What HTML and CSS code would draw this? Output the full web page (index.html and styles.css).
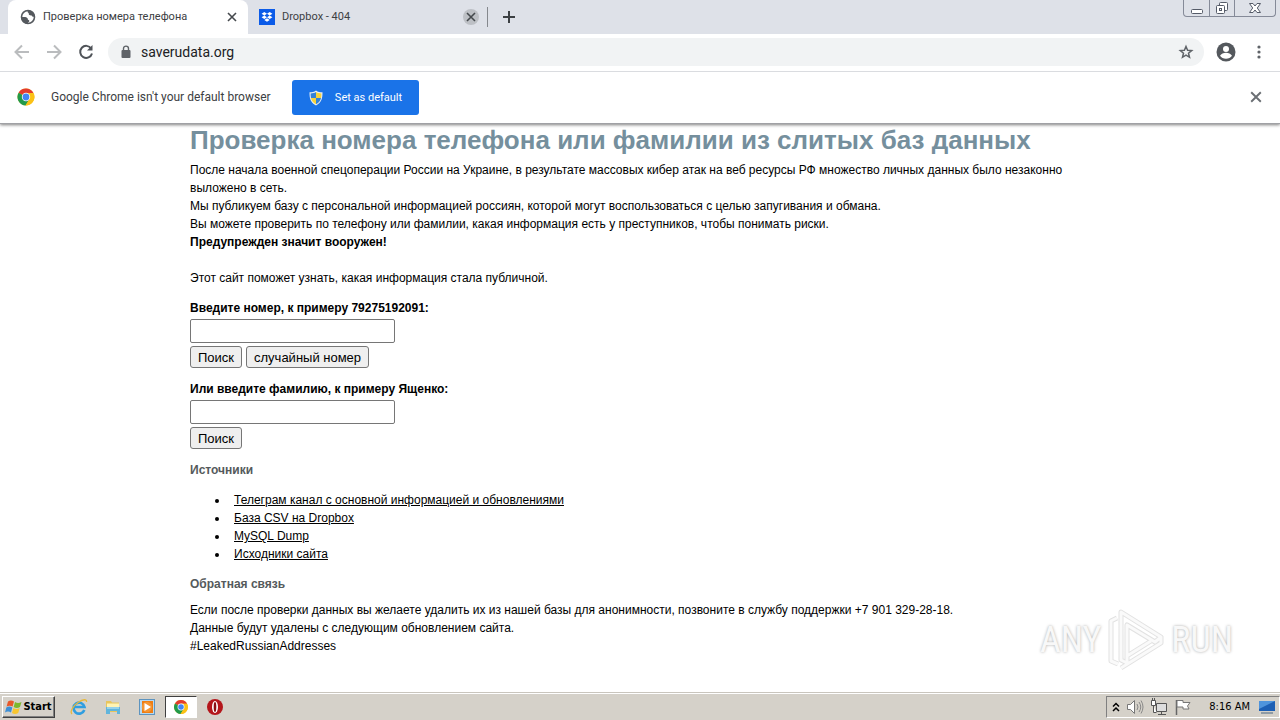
FILE: index.html
```html
<!DOCTYPE html>
<html lang="ru">
<head>
  <meta charset="UTF-8" />
  <meta name="viewport" content="width=device-width, initial-scale=1.0" />
  <title>Проверка номера телефона</title>
  <link rel="stylesheet" href="styles.css">
</head>
<body>
  <svg class="defs" aria-hidden="true">
    <symbol id="chrome" viewBox="0 0 18 18">
      <circle cx="9" cy="9" r="8.500" fill="#fbc116" />
      <path d="M9 9 1.600 4.700A8.500 8.500 0 0 1 16.400 5H9z" fill="#e33b2e" />
      <path d="M1.600 4.700A8.500 8.500 0 0 0 8.500 17.500l4-6.500L9 9z" fill="#229a4b" />
      <path d="M9 5h7.400A8.500 8.500 0 0 1 8.500 17.500l4-6.500z" fill="#fbc116" />
      <circle cx="9" cy="9" r="4.200" fill="#fff" />
      <circle cx="9" cy="9" r="3.400" fill="#4285f4" />
    </symbol>
    <symbol id="cross" viewBox="0 0 10 10">
      <path d="M1 1l8 8M9 1L1 9" fill="none" stroke="currentColor" stroke-width="1.6" />
    </symbol>
  </svg>

  <header class="browser">
    <div class="tabs">
      <div class="tab active">
        <svg class="favicon" viewBox="0 0 16 16"><circle cx="8" cy="8" r="6.500" fill="#fff" stroke="#55595e" stroke-width="1.600" /><path d="M8 1.200c3 0 6.600 2.500 6.800 6.200-1 .8-2.300.5-2.800-.4-.4-.8-1.700-.3-2.600-.9-1-.7-.2-1.700-.9-2.200S7 2.500 8 1.200zM1.300 8h3.900c1.300 0 2.600 1 2.600 2.200 0 .8 1.500.6 1.500 1.700 0 1.200-1.500 1.100-1.700 2.900C4 14.800 1.200 11.500 1.300 8z" fill="#55595e" /></svg>
        <span class="tab-title">Проверка номера телефона</span>
        <button class="tab-close" aria-label="Close tab"><svg><use href="#cross" /></svg></button>
      </div>
      <div class="tab">
        <svg class="favicon" viewBox="0 0 16 16"><path fill="#0b5be8" d="M0 0h16v16H0z" /><path fill="#fff" d="M5.300 3L8 4.800 5.300 6.500 2.600 4.800zM10.700 3l2.700 1.800-2.700 1.700L8 4.800zM5.300 6.500L8 8.200 5.300 10 2.600 8.200zM10.700 6.500l2.700 1.700-2.700 1.800L8 8.200zM8 9.200l2.700 1.800L8 12.700 5.300 11z" /></svg>
        <span class="tab-title">Dropbox - 404</span>
        <button class="tab-close round" aria-label="Close tab"><svg><use href="#cross" /></svg></button>
      </div>
      <button class="new-tab" aria-label="New tab"><svg viewBox="0 0 12 12"><path d="M6 0v12M0 6h12" stroke="#3c4043" stroke-width="2" /></svg></button>
      <div class="window-buttons">
        <button aria-label="Minimize"><svg viewBox="0 0 14 14"><rect x="1.500" y="8.500" width="11" height="4" rx="1" fill="#fff" stroke="#555b68" /></svg></button>
        <button aria-label="Restore"><svg viewBox="0 0 14 14"><rect x="4.500" y="1.500" width="8" height="8" rx="1" fill="#fff" stroke="#555b68" /><rect x="1.500" y="4.500" width="8" height="8" rx="1" fill="#fff" stroke="#555b68" /><rect x="4.500" y="7.500" width="2" height="2" fill="#fff" stroke="#555b68" /></svg></button>
        <button class="wide" aria-label="Close"><svg viewBox="0 0 14 14"><path d="M1.500 2.500h3.500l2 2.500 2-2.500h3.500L9.300 7l3.200 4.500H9L7 9l-2 2.500H1.500L4.700 7z" fill="#fff" stroke="#555b68" /></svg></button>
      </div>
    </div>

    <div class="toolbar">
      <button class="nav off" aria-label="Back"><svg viewBox="0 0 16 16"><path d="M15 8H2M8 1.500L1.500 8 8 14.500" /></svg></button>
      <button class="nav off" aria-label="Forward"><svg viewBox="0 0 16 16"><path d="M1 8h13M8 1.500L14.500 8 8 14.500" /></svg></button>
      <button class="nav" aria-label="Reload"><svg viewBox="0 0 16 16"><path d="M13.200 4.500A6 6 0 1 0 14 9.500" /><path d="M14.500 1v5.500H9z" class="solid" /></svg></button>
      <div class="address">
        <svg class="lock" viewBox="0 0 10 14"><path d="M2.500 6V3.600a2.500 2.500 0 0 1 5 0V6" fill="none" stroke="#5f6368" stroke-width="1.400" /><rect x="0.500" y="5" width="9" height="8" rx="1" fill="#5f6368" /></svg>
        <input type="text" value="saverudata.org" aria-label="Address" />
        <svg class="star" viewBox="0 0 16 16"><path d="M8 2.500l1.600 3.800 4.100.3-3.200 2.700 1 4L8 11.200l-3.500 2.100 1-4-3.200-2.700 4.100-.3z" fill="none" stroke="#5f6368" stroke-width="1.500" /></svg>
      </div>
      <button class="profile" aria-label="Profile"><svg viewBox="0 0 20 20"><circle cx="10" cy="10" r="9.500" fill="#54585d" /><circle cx="10" cy="7" r="3" fill="#fff" /><path d="M4 13.800c1.200-2 3.500-3 6-3s4.800 1 6 3c-1.300 1.900-3.500 3-6 3s-4.700-1.100-6-3z" fill="#fff" /></svg></button>
      <button class="menu" aria-label="Menu"><svg viewBox="0 0 4 14"><g fill="#5f6368"><circle cx="2" cy="2" r="1.600" /><circle cx="2" cy="7" r="1.600" /><circle cx="2" cy="12" r="1.600" /></g></svg></button>
    </div>

    <div class="infobar">
      <svg class="logo"><use href="#chrome" /></svg>
      <span class="message">Google Chrome isn't your default browser</span>
      <button class="set-default">
        <svg viewBox="0 0 14 16"><path d="M7 .5c2 1.500 4 1.800 6.500 1.800 0 6-.8 10.200-6.500 13.200C1.300 12.500.5 8.300.5 2.300 3 2.300 5 2 7 .5z" fill="#e9eef2" /><path d="M7 2v6H2C1.700 6.500 1.600 5 1.600 3.400 3.600 3.400 5.500 3 7 2z" fill="#3382d8" /><path d="M7 2c1.500 1 3.400 1.400 5.400 1.400 0 1.600-.1 3.100-.4 4.600H7zM2 8h5v6.200C4 12.700 2.600 10.700 2 8z" fill="#f6d33c" /><path d="M7 8h5c-.6 2.700-2 4.700-5 6.200z" fill="#3382d8" /></svg>
        Set as default
      </button>
      <button class="info-close" aria-label="Dismiss"><svg><use href="#cross" /></svg></button>
    </div>
  </header>

  <main class="page">
    <div class="content">
      <h1>Проверка номера телефона или фамилии из слитых баз данных</h1>
      <p>
        После начала военной спецоперации России на Украине, в результате массовых кибер атак на веб ресурсы РФ множество личных данных было незаконно выложено в сеть.<br />
        Мы публикуем базу с персональной информацией россиян, которой могут воспользоваться с целью запугивания и обмана.<br />
        Вы можете проверить по телефону или фамилии, какая информация есть у преступников, чтобы понимать риски.<br />
        <b>Предупрежден значит вооружен!</b><br />
        <br />
        Этот сайт поможет узнать, какая информация стала публичной.
      </p>
      <form>
        <label for="phone">Введите номер, к примеру 79275192091:</label>
        <input type="text" id="phone" name="phone" />
        <div class="actions">
          <button type="button">Поиск</button>
          <button type="button">случайный номер</button>
        </div>
      </form>
      <form>
        <label for="surname">Или введите фамилию, к примеру Ященко:</label>
        <input type="text" id="surname" name="surname" />
        <div class="actions">
          <button type="button">Поиск</button>
        </div>
      </form>
      <h3>Источники</h3>
      <ul>
        <li><a href="#">Телеграм канал с основной информацией и обновлениями</a></li>
        <li><a href="#">База CSV на Dropbox</a></li>
        <li><a href="#">MySQL Dump</a></li>
        <li><a href="#">Исходники сайта</a></li>
      </ul>
      <h3 class="feedback">Обратная связь</h3>
      <p>
        Если после проверки данных вы желаете удалить их из нашей базы для анонимности, позвоните в службу поддержки +7 901 329-28-18.<br />
        Данные будут удалены с следующим обновлением сайта.<br />
        #LeakedRussianAddresses
      </p>
    </div>
    <div class="watermark">
      <span>ANY</span>
      <svg viewBox="0 0 58 64"><g fill="none" stroke-linejoin="round"><path d="M10 10L4 13v40l7 3M14 4l40 25-6 5-28-17v38l-6-3zM14 60l40-25v-6M20 17v31l24-15" stroke="#e2e2e2" stroke-width="5" /><path d="M10 10L4 13v40l7 3M14 4l40 25-6 5-28-17v38l-6-3zM14 60l40-25v-6M20 48l24-15" stroke="#fafafa" stroke-width="3" /></g></svg>
      <span>RUN</span>
    </div>
  </main>

  <footer class="taskbar">
    <button class="start">
      <svg viewBox="0 0 18 16"><path d="M3 2.500c2-1.300 4-1.200 6 0L7.600 7.600c-2-1.200-4-1.200-6 0z" fill="#e8582a" /><path d="M10 3c2 1.200 4 1.200 6.500 0L15 8c-2.200 1.200-4.200 1.200-6.300 0z" fill="#7db82d" /><path d="M1.300 8.500c2-1.200 4-1.200 6 0L6 13.500c-2-1.200-4-1.200-6 0z" fill="#3d8fd6" /><path d="M8.400 9c2 1.200 4 1.200 6.300 0l-1.500 5c-2.200 1.200-4.200 1.200-6.200 0z" fill="#f8c62f" /></svg>
      Start
    </button>
    <nav class="apps">
      <button aria-label="Internet Explorer"><svg viewBox="0 0 18 18"><path d="M14.300 12A5.500 5.500 0 1 1 14.500 9H5" fill="none" stroke="#2f9ee0" stroke-width="2.600" /><path d="M2 16c-2.500-2 1-8 6-11.500S17 .8 16.500 4" fill="none" stroke="#e7b83a" stroke-width="1.300" /></svg></button>
      <button aria-label="Explorer"><svg viewBox="0 0 18 18"><path d="M2 3h5l1 1.500h7V14H2z" fill="#e8c55d" /><path d="M3 5.500h12V9H3z" fill="#fff3b4" /><path d="M2 9h14v7h-3v-3H6v3H2z" fill="#61b5dc" /><path d="M3 10h12" stroke="#c9edfa" /></svg></button>
      <button aria-label="Media Player"><svg viewBox="0 0 18 18"><rect x="1.500" y="1.500" width="15" height="15" fill="#b6d9f1" stroke="#5d94bf" /><rect x="4" y="3" width="11" height="12" fill="#ee7d13" /><circle cx="9" cy="9" r="5.200" fill="#f49532" /><path d="M6.500 5L13 9l-6.500 4z" fill="#fff" /></svg></button>
      <button class="pressed" aria-label="Chrome"><svg viewBox="-2 -2 22 22"><use href="#chrome" width="18" height="18" /></svg></button>
      <button aria-label="Opera"><svg viewBox="0 0 18 18"><circle cx="9" cy="9" r="8" fill="#b4161b" /><ellipse cx="9" cy="9" rx="3" ry="6" fill="#fff" /><ellipse cx="9" cy="9" rx="1.300" ry="5" fill="#8c0f13" /></svg></button>
    </nav>
    <div class="tray">
      <svg class="chevrons" viewBox="0 0 8 10"><path d="M1 4.500l3-3 3 3M1 9l3-3 3 3" fill="none" stroke="#000" stroke-width="1.500" /></svg>
      <svg viewBox="0 0 18 18"><path d="M1.500 6.500h3l4-4v13l-4-4h-3z" fill="#fff" stroke="#777" /><path d="M11 6q2 3 0 6M13 4q3.500 5 0 10M15 2.500q4 6.500 0 13" fill="none" stroke="#888" /></svg>
      <svg viewBox="0 0 18 18"><path d="M6.500 5.500h10v8h-10zM8 16.500h8M11.500 13.500v3" fill="#ddd" stroke="#555" /><path d="M1.500 2.500h4v5h-4zM2.500 0v2M4.500 0v2M3.500 7.500v7h3" fill="#fff" stroke="#555" /></svg>
      <svg viewBox="0 0 18 18"><path d="M2.500 17V2" stroke="#666" stroke-width="1.500" /><path d="M3 2.500h6v2h7l-2.500 3.500 1.500 3H9V9H3z" fill="#fff" stroke="#777" /></svg>
      <time>8:16 AM</time>
      <svg viewBox="0 0 18 18"><path d="M1 3h16v10H1z" fill="#1d5fb4" /><path d="M1 3h16L1 11z" fill="#4f94dc" /><path d="M3 15h12" stroke="#789" stroke-width="1.500" /></svg>
    </div>
  </footer>
</body>
</html>
```

FILE: styles.css
```css
* { box-sizing: border-box; }
body { margin: 0; min-height: 100vh; display: flex; flex-direction: column; background: #fff; color: #000; font-family: "Liberation Sans", Arial, sans-serif; font-size: 12px; line-height: 18px; }
button { font-family: inherit; padding: 0; }
svg { display: block; flex: none; }
.defs { position: absolute; width: 0; height: 0; }

/* browser window */
.browser { font-family: Roboto, Tahoma, sans-serif; color: #3c4043; box-shadow: 0 1px 3px rgba(0,0,0,0.5); border-bottom: 1px solid #a0a1a5; position: relative; }
.browser button { display: flex; align-items: center; justify-content: center; border: none; background: none; color: #45494d; }
.tabs { display: flex; align-items: center; height: 34px; padding-left: 8px; background: #dee1e8; }
.tab { display: flex; align-items: center; height: 34px; width: 239px; padding: 0 8px 0 11px; font-size: 11px; }
.tab.active { width: 240px; background: #fff; border-radius: 8px 8px 0 0; padding: 0 8px 0 12px; }
.favicon { width: 16px; height: 16px; margin-right: 7px; }
.tab-title { flex: 1; white-space: nowrap; }
.tab-close { width: 16px; height: 16px; border-radius: 50%; }
.browser .tab-close.round { background: #bdc0c5; }
.tab-close svg { width: 10px; height: 10px; }
.new-tab { width: 42px; height: 20px; }
.browser .new-tab { border-left: 1px solid #85888d; }
.new-tab svg { width: 12px; height: 12px; }
.window-buttons { display: flex; align-self: flex-start; height: 17px; margin: 0 4px 0 auto; border: 1px solid #858a98; border-top: none; border-radius: 0 0 4px 4px; }
.window-buttons button { width: 25px; }
.window-buttons button + button { border-left: 1px solid #858a98; }
.window-buttons .wide { width: 41px; }
.window-buttons svg { width: 14px; height: 14px; }
.toolbar { display: flex; align-items: center; height: 38px; padding: 0 10px 2px 6px; border-bottom: 1px solid #dadce0; }
.nav { width: 32px; height: 28px; }
.nav svg { width: 16px; height: 16px; fill: none; stroke: #4f5358; stroke-width: 2; }
.nav.off svg { stroke: #babcbe; }
.nav .solid { fill: #4f5358; stroke: none; }
.address { display: flex; align-items: center; flex: 1; height: 28px; margin-left: 6px; padding: 0 10px 0 13px; border-radius: 14px; background: #f1f3f4; }
.lock { width: 10px; height: 14px; }
.address input { flex: 1; min-width: 0; margin-left: 10px; padding: 0; border: none; background: none; outline: none; color: #202124; font-family: inherit; font-size: 14px; }
.star { width: 16px; height: 16px; }
.profile { width: 44px; height: 28px; }
.profile svg { width: 20px; height: 20px; }
.menu { width: 22px; height: 28px; }
.menu svg { width: 4px; height: 14px; }
.infobar { display: flex; align-items: center; height: 51px; padding: 0 18px 2px 17px; font-size: 12px; }
.logo { width: 18px; height: 18px; margin-right: 16px; }
.message { min-width: 228px; }
.browser .set-default { width: 127px; height: 35px; margin: 2px 0 0 13px; border-radius: 3px; background: #1a73e8; color: #fff; font-size: 11px; gap: 12px; }
.set-default svg { width: 14px; height: 16px; }
.browser .info-close { margin-left: auto; color: #6b6f74; }
.info-close svg { width: 12px; height: 12px; }

/* site */
.page { flex: 1; position: relative; padding: 1px 20px 0; }
.content { max-width: 900px; margin: 0 auto; }
h1 { margin: 0 0 6px; font-size: 26px; line-height: 30px; color: #758f9d; }
p { margin: 0; }
form { margin-top: 12px; }
label { display: block; margin-bottom: 2px; font-weight: bold; }
form input { display: block; width: 205px; height: 24px; padding: 1px 2px; border: 1px solid #767676; border-radius: 2px; }
.actions { display: flex; gap: 4px; margin-top: 3px; }
.actions button { height: 22px; padding: 0 7px; border: 1px solid #767676; border-radius: 3px; background: #efefef; color: #000; font-size: 13px; }
h3 { margin: 12px 0; font-size: 12px; line-height: 18px; color: #555a5c; }
.feedback { margin-bottom: 8px; }
ul { margin: 0; padding-left: 39px; }
li { padding-left: 5px; }
a { color: #000; }
.watermark { position: absolute; right: 47px; bottom: 20px; display: flex; align-items: center; gap: 6px; color: #f8f8f8; font: 36px/64px "Roboto Condensed", Roboto, sans-serif; text-shadow: 0 0 3px #aaa; }
.watermark svg { width: 58px; height: 64px; }

/* taskbar */
.taskbar { display: flex; align-items: center; height: 28px; padding-left: 2px; background: #d5d1c9; border-top: 1px solid #c9c5bd; box-shadow: inset 0 1px #fff; font-family: "DejaVu Sans Condensed", Tahoma, sans-serif; font-size: 11px; }
.taskbar button { display: flex; align-items: center; justify-content: center; }
.start { width: 53px; height: 22px; border: 1px solid; border-color: #fff #404040 #404040 #fff; box-shadow: inset -1px -1px #808080; background: #d5d1c9; color: #000; font-size: 11px; font-weight: bold; }
.start svg { width: 18px; height: 16px; }
.apps { display: flex; gap: 2px; margin-left: 8px; }
.apps button { width: 32px; height: 22px; border: 1px solid transparent; background: none; }
.apps .pressed { border-color: #404040 #fff #fff #404040; background: #fff; }
.apps svg { width: 18px; height: 18px; }
.tray { display: flex; align-items: center; gap: 6px; height: 22px; margin-left: auto; padding: 0 3px 0 5px; border: 1px solid; border-color: #808080 #fff #fff #808080; }
.tray svg { width: 18px; height: 18px; }
.tray .chevrons { width: 8px; height: 10px; }
.tray time { margin: 0 2px 0 11px; white-space: nowrap; }
```
